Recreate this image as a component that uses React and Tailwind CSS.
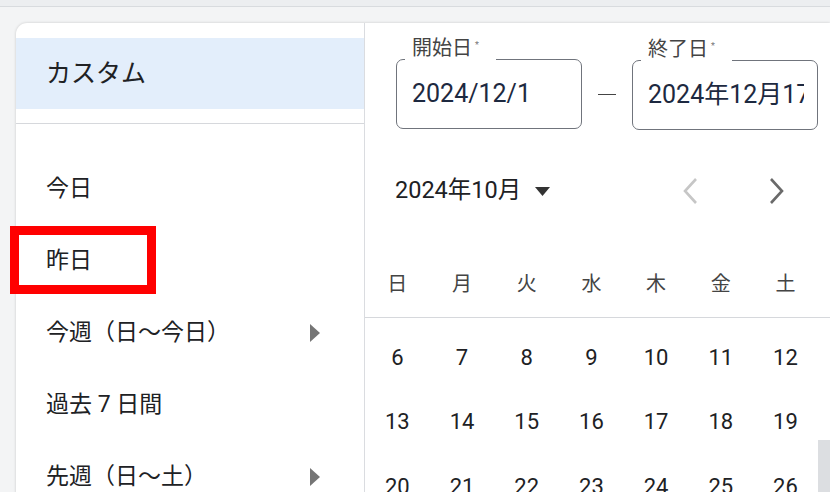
import React from "react";

const font = { fontFamily: 'Roboto, "Noto Sans CJK JP", sans-serif' };

const presets = [
	{ label: "今日" },
	{ label: "昨日" },
	{ label: "今週（日～今日）", more: true },
	{ label: "過去 7 日間" },
	{ label: "先週（日～土）", more: true },
];

const weekdays = ["日", "月", "火", "水", "木", "金", "土"];

const weeks = [
	[6, 7, 8, 9, 10, 11, 12],
	[13, 14, 15, 16, 17, 18, 19],
	[20, 21, 22, 23, 24, 25, 26],
];

function DateField({ label, value }) {
	return (
		<div className="relative">
			<div className="w-[186px] h-[70px] rounded-[7px] border-[1.5px] border-[#70747c] flex items-center pl-[15px] pr-[13px]">
				<div className="overflow-hidden whitespace-nowrap">
					<span className="text-[25px] text-[#1d2940]">{value}</span>
				</div>
			</div>
			<div className="absolute z-10 left-[9px] top-[-2px] w-[91px] h-[6px] bg-white" />
			<div className="absolute z-20 left-[16px] top-[-23px] flex items-start text-[20px] leading-[24px] text-[#444]">
				{label}
				<span className="text-[9px] leading-[12px] ml-[3px] mt-[3px] text-[#777]">*</span>
			</div>
		</div>
	);
}

export default function App() {
	return (
		<div className="w-[830px] h-[492px] overflow-hidden bg-[#f3f4f5] relative" style={font}>
			<div className="h-[7px] bg-[#eceef0] border-b border-[#d8dbde]" />
			<div className="ml-[16px] mt-[16px] h-[500px] bg-white rounded-tl-[11px] shadow-[0_0_3px_rgba(0,0,0,0.18)] flex">
				{/* presets */}
				<div className="w-[349px] shrink-0 border-r border-[#dadce0] pt-[15px]">
					<div className="h-[71px] bg-[#e3eefb] flex items-center pl-[30px] text-[25px] text-[#202124]">
						カスタム
					</div>
					<div className="h-[15px] border-b border-[#d6d8dc]" />
					<div className="pt-[29px]">
						{presets.map((p) => (
							<div key={p.label} className="h-[72px] flex items-center justify-between pl-[30px] pr-[44px] text-[23px] text-[#202124]">
								<span>{p.label}</span>
								{p.more && (
									<svg width="10" height="18" viewBox="0 0 10 18">
										<path d="M0 0 L10 9 L0 18 Z" fill="#757575" />
									</svg>
								)}
							</div>
						))}
					</div>
				</div>

				{/* calendar */}
				<div className="flex-1 relative">
					<div className="flex items-center pl-[31px] pt-[34px]">
						<DateField label="開始日" value="2024/12/1" />
						<div className="w-[18px] h-[1.5px] bg-[#444] mx-[16px] mt-[2px]" />
						<div className="mt-[3px]">
							<DateField label="終了日" value="2024年12月17日" />
						</div>
					</div>

					<div className="mt-[33px] h-[56px] flex items-center pl-[30px] pr-[45px]">
						<span className="text-[23.5px] text-[#202124]">2024年10月</span>
						<svg className="ml-[14px]" width="15" height="9" viewBox="0 0 15 9">
							<path d="M0 0 H15 L7.5 9 Z" fill="#333" />
						</svg>
						<div className="ml-auto flex items-center gap-[71px]">
							<svg width="16" height="28" viewBox="0 0 16 28">
								<path d="M14 2 L3 14 L14 26" fill="none" stroke="#c6c6c6" strokeWidth="2.6" />
							</svg>
							<svg width="16" height="28" viewBox="0 0 16 28">
								<path d="M2 2 L13 14 L2 26" fill="none" stroke="#6a6a6a" strokeWidth="2.6" />
							</svg>
						</div>
					</div>

					<div className="mt-[32px] h-[67px] grid items-center border-b border-[#d6d8dc] text-[20px] text-[#444] text-center"
						style={{ gridTemplateColumns: "repeat(7, 64.7px)" }}>
						{weekdays.map((d) => (
							<span key={d}>{d}</span>
						))}
					</div>

					<div className="pt-[7px]">
						{weeks.map((w, i) => (
							<div key={i} className="grid h-[64.5px] items-center text-center text-[22px] text-[#202124]" style={{ gridTemplateColumns: "repeat(7, 64.7px)" }}>
								{w.map((d) => (
									<span key={d}>{d}</span>
								))}
							</div>
						))}
					</div>

					<div className="absolute right-0 top-[417px] w-[12px] h-[80px] bg-[#dcdee1]" />
				</div>
			</div>

			{/* highlight annotation */}
			<div className="absolute left-[10px] top-[226px] w-[146px] h-[68px] border-[9px] border-[#ff0000]" />
		</div>
	);
}
